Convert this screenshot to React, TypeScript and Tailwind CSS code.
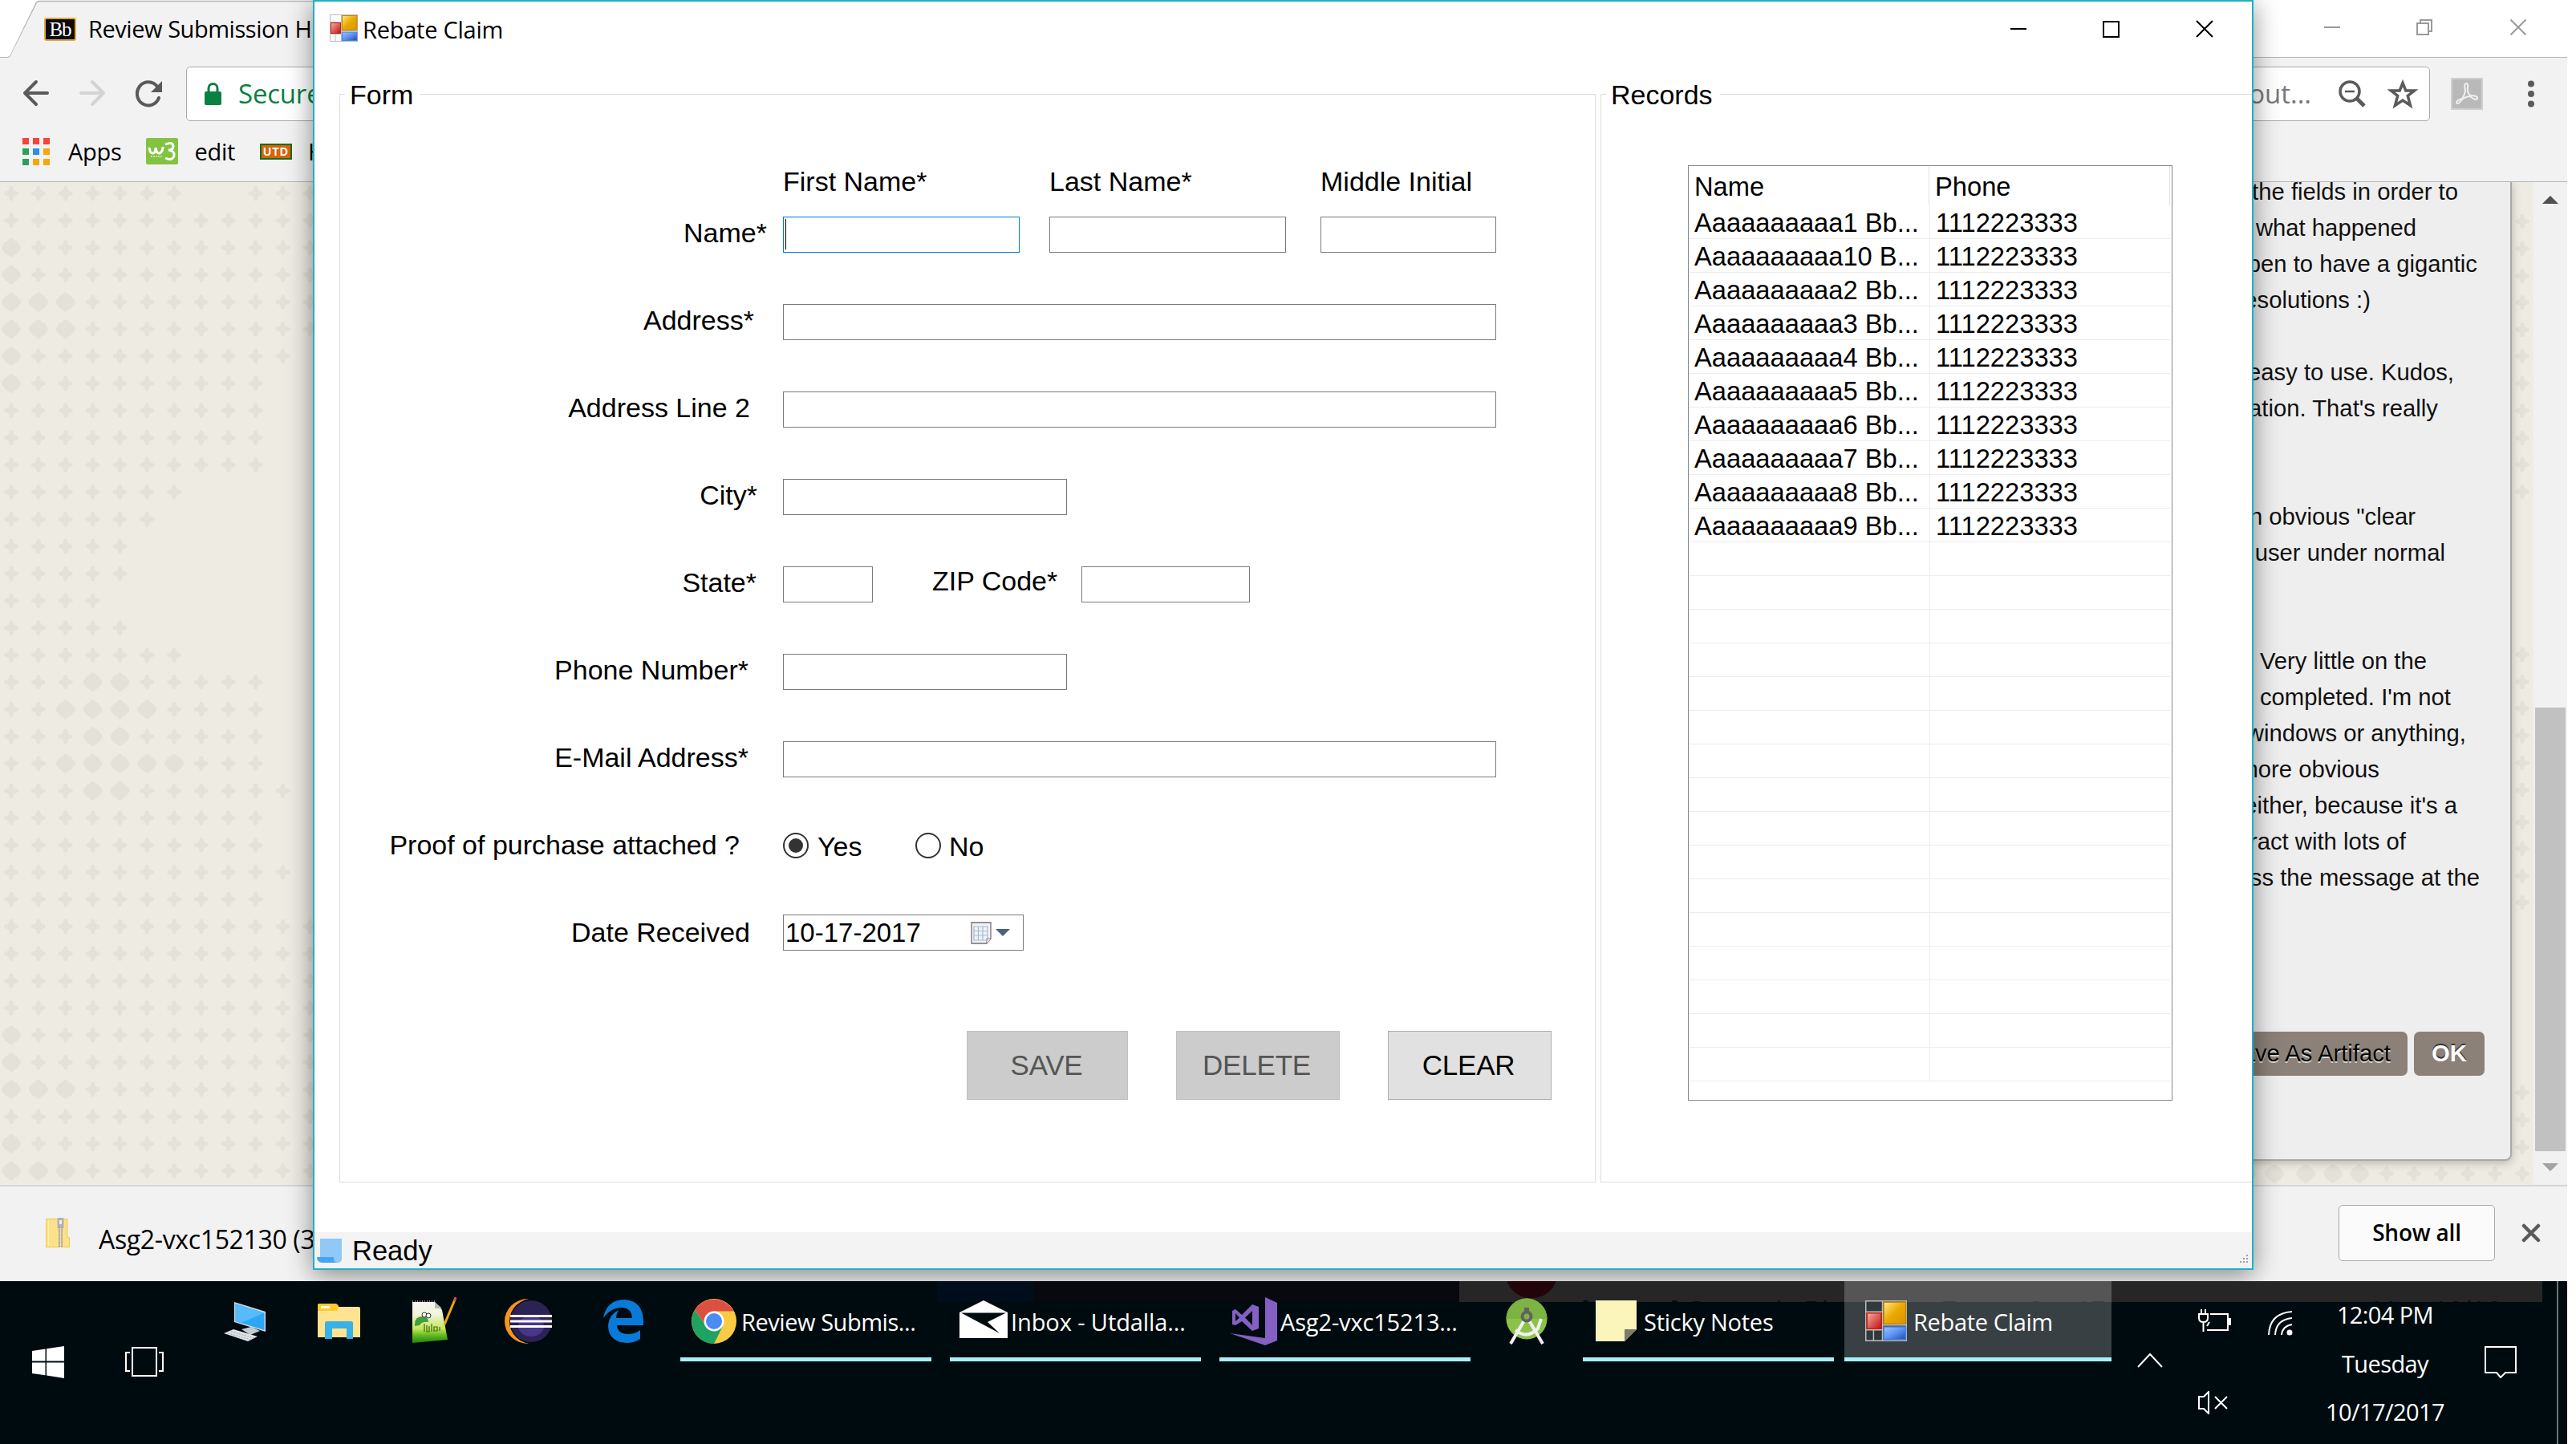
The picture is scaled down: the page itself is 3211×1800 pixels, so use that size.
import React from "react";

/* ---------- page background ornament ---------- */

const P = 33.85;
const LEFT_ROWS: string[] = [
  "+++++++..+++",
  "++++++++++++",
  "o+++++++++++",
  "o+++++++++++",
  "ooo+++++++++",
  "ooo+++++++++",
  "o++++++++++.",
  "o+++++++++..",
  "++++++++++..",
  "++++++++++..",
  "++++++++++..",
  "+++++++.....",
  "++++++......",
  "+++++.......",
  "+++++.......",
  "++++........",
  "+++++.......",
  "+++++++.....",
  "+++oo+++++..",
  "++oooo++++..",
  "+++oo+++++..",
  "++ooooo+++..",
  "+++oo++++++.",
  "++++++++++..",
  "++++++++++..",
  "+++++++++++.",
  "++++++++++..",
  "++++++++++++",
  "++++++++++++",
  "++++++++++++",
  "++++++++++++",
  "o+++++++++++",
  "o+++++++++++",
  "ooo+++++++++",
  "++++++++++++",
  "o+++++++++++",
  "ooo+++++++++",
];

function Plus({ x, y }: { x: number; y: number }) {
  return (
    <path
      transform={`translate(${x} ${y})`}
      d="M-2-8.500Q0-10 2-8.500L3.500-3.500L8-2Q10 0 8 2L3.500 3.500L2 8.500Q0 10-2 8.500L-3.500 3.500L-8 2Q-10 0-8-2L-3.500-3.500Z"
      fill="#e4e1d9"
    />
  );
}
function Flower({ x, y }: { x: number; y: number }) {
  return (
    <path
      transform={`translate(${x} ${y})`}
      d="M-4-9Q0-15 4-9L8-7Q9-4 10-4Q14 0 10 4Q9 4 8 7L4 9Q0 15-4 9L-8 7Q-9 4-10 4Q-14 0-10-4Q-9-4-8-7Z"
      fill="#e4e1d9"
    />
  );
}

const RIGHT_YS = [
  49, 83, 117, 150, 184, 217, 251, 285, 319, 352, 386, 589, 623, 656, 690, 724, 758, 798, 831, 865, 898, 1135, 1169, 1203,
];

function Ornament() {
  return (
    <svg className="absolute inset-0" width="3158" height="1250" viewBox="0 0 3158 1250">
      {LEFT_ROWS.map((row, r) =>
        row.split("").map((c, k) =>
          c === "+" ? (
            <Plus key={`${r}-${k}`} x={14 + P * k} y={14 + P * r} />
          ) : c === "o" ? (
            <Flower key={`${r}-${k}`} x={14 + P * k} y={14 + P * r} />
          ) : null,
        ),
      )}
      {RIGHT_YS.map((y) => (
        <Plus key={y} x={3144} y={y} />
      ))}
      {[2801, 2835, 2874, 2908, 2941].map((x) => (
        <Flower key={x} x={x} y={1236} />
      ))}
      {[2975, 3009, 3043, 3076, 3110, 3144].map((x) => (
        <Plus key={x} x={x} y={1236} />
      ))}
    </svg>
  );
}

/* ---------- icons ---------- */

function FormIcon({ className, dark }: { className: string; dark?: boolean }) {
  const cell = dark ? "#30393c" : "#ffffff";
  return (
    <svg className={className} viewBox="0 0 35 34" preserveAspectRatio="none">
      <defs>
        <linearGradient id="fy" x1="0" y1="0" x2="1" y2="1">
          <stop offset="0" stopColor="#ffe98a" />
          <stop offset=".5" stopColor="#eaa800" />
          <stop offset="1" stopColor="#d89400" />
        </linearGradient>
        <linearGradient id="fr" x1="0" y1="0" x2="1" y2="1">
          <stop offset="0" stopColor="#f7b0a8" />
          <stop offset="1" stopColor="#c00f0f" />
        </linearGradient>
        <linearGradient id="fb" x1="0" y1="0" x2="1" y2="1">
          <stop offset="0" stopColor="#9cc4ff" />
          <stop offset=".5" stopColor="#5b93f5" />
          <stop offset="1" stopColor="#1d4da8" />
        </linearGradient>
      </defs>
      <rect x=".5" y=".5" width="34" height="33" fill={cell} stroke="#bdbdbd" />
      <path d="M14.500 0V34M0 9.500H14M0 24.500H14M7 25V34M14 20.500H35" stroke="#bdbdbd" />
      <rect x="1.500" y="10.500" width="12" height="13" fill="url(#fr)" stroke="#c8200f" />
      <rect x="15.500" y="1.500" width="18.500" height="18" fill="url(#fy)" stroke="#c08a00" />
      <rect x="15.500" y="22" width="18.500" height="10.500" fill="url(#fb)" stroke="#4a7fdc" />
    </svg>
  );
}

function BackArrow({ className }: { className: string }) {
  return (
    <svg className={className} viewBox="0 0 34 34" fill="none" stroke="currentColor" strokeWidth="4" strokeLinecap="round" strokeLinejoin="round">
      <path d="M31 17H3M17 3L3 17L17 31" />
    </svg>
  );
}
function Reload() {
  return (
    <svg className="h-[34px] w-[36px]" viewBox="0 0 36 34">
      <path d="M29 8A14 14.500 0 1 0 31 22" fill="none" stroke="#5a5a5a" strokeWidth="4" strokeLinecap="round" />
      <path d="M35 1V15H21Z" fill="#5a5a5a" />
    </svg>
  );
}
function AppsGrid() {
  const colors = ["#f7423a", "#f7423a", "#f7423a", "#2da05a", "#2a8cf0", "#f5a70c", "#2da05a", "#f5a70c", "#f5a70c"];
  return (
    <div className="grid grid-cols-3 gap-x-[5px] gap-y-[5px]">
      {colors.map((c, i) => (
        <div key={i} className="h-[8px] w-[8px]" style={{ backgroundColor: c }} />
      ))}
    </div>
  );
}

/* ---------- browser ---------- */

const seg = "font-['Open_Sans',sans-serif]";
const ari = "font-['Liberation_Sans',Arial,sans-serif]";

function BrowserTop() {
  return (
    <div className="relative h-[227px] w-full bg-[#f2f2f2] border-b border-[#b6b4b6]">
      <div className="flex h-[72px] items-start justify-between border-b border-[#b5b5b5] bg-white">
        <div className="relative flex h-[72px] w-[460px] items-center">
          <svg className="absolute left-0 top-0" width="460" height="72" viewBox="0 0 460 72">
            <path d="M0 71.500H9Q13 71 15 66L43 6Q45 1.500 48 1.500H460V73H0Z" fill="#f2f2f2" />
            <path d="M0 71.500H9Q12.500 71 14 66L44 6Q45.500 1.500 49 1.500H460" fill="none" stroke="#b5b5b5" strokeWidth="1.500" />
            <path d="M0 0H46Q43.500 2 43 6L14 66Q12.500 70.500 9 71H0Z" fill="#fff" />
          </svg>
          <div className="relative ml-[55px] flex h-[29px] w-[40px] items-center justify-center rounded-[3px] border-2 border-[#e0a93a] bg-[#0c0c0c] font-['Liberation_Serif',serif] text-[25px] leading-none tracking-[-1px] text-white">
            Bb
          </div>
          <span className={`relative ml-[15px] whitespace-nowrap text-[29px] leading-[70px] tracking-[-0.450px] text-black ${seg}`}>
            Review Submission H
          </span>
        </div>
        <div className="mr-[51px] mt-[24px] flex text-[#9a9a9a]">
          <svg className="h-[20px] w-[20px]" viewBox="0 0 20 20">
            <path d="M0 10H20" stroke="currentColor" strokeWidth="2" />
          </svg>
          <svg className="ml-[95px] h-[20px] w-[20px]" viewBox="0 0 20 20" fill="none" stroke="currentColor" strokeWidth="2">
            <path d="M1 5H15V19H1ZM5 5V1H19V15H15" />
          </svg>
          <svg className="ml-[97px] h-[20px] w-[20px]" viewBox="0 0 20 20" stroke="currentColor" strokeWidth="2">
            <path d="M0.500 0.500L19.500 19.500M19.500 0.500L0.500 19.500" />
          </svg>
        </div>
      </div>
      <div className="flex h-[79px] items-end">
        <BackArrow className="mb-[18px] ml-[28px] h-[34px] w-[34px] text-[#5a5a5a]" />
        <BackArrow className="mb-[18px] ml-[36px] h-[34px] w-[34px] rotate-180 text-[#d3d3d3]" />
        <div className="mb-[17px] ml-[35px]">
          <Reload />
        </div>
        <div className="ml-[29px] flex h-[68px] w-[2797px] items-center rounded-[5px] border border-[#a9a9a9] bg-white">
          <svg className="ml-[22px] h-[28px] w-[21px]" viewBox="0 0 21 28">
            <rect x="0" y="11" width="21" height="17" rx="2" fill="#0b8043" />
            <path d="M5 12V7A5.500 5.500 0 0 1 16 7V12" fill="none" stroke="#0b8043" strokeWidth="3" />
          </svg>
          <span className={`ml-[21px] text-[33px] tracking-[-0.200px] text-[#0b8043] ${seg}`}>Secure</span>
          <span className={`ml-auto text-[33px] text-[#777] ${seg}`}>out...</span>
          <svg className="ml-[34px] h-[35px] w-[35px]" viewBox="0 0 35 35" fill="none" stroke="#5a5a5a">
            <circle cx="14" cy="14" r="12" strokeWidth="3.500" />
            <path d="M8 14H20" strokeWidth="2.500" />
            <path d="M23 23L32 32" strokeWidth="5" />
          </svg>
          <svg className="ml-[26px] mr-[14px] h-[37px] w-[38px]" viewBox="0 0 38 37" fill="none" stroke="#5a5a5a" strokeWidth="3.500">
            <path d="M19 4.500L22.800 14H33.500L25.300 20.500L28.500 32.500L19 26L9.500 32.500L12.700 20.500L4.500 14H15.200Z" />
          </svg>
        </div>
        <svg className="mb-[14px] ml-[26px] h-[40px] w-[40px]" viewBox="0 0 40 40">
          <rect x="1" y="1" width="38" height="38" fill="#b9b9b9" stroke="#d0d0d0" strokeWidth="2" />
          <path
            d="M19 7Q22 7 21 12Q20 18 24 22Q34 22 33 26Q31 29 24 23Q17 24 14 27Q9 34 7 31Q7 28 14 26Q18 20 18 14Q16 8 19 7Z"
            fill="none"
            stroke="#f0f0f0"
            strokeWidth="2"
          />
        </svg>
        <svg className="mb-[17px] ml-[56px] h-[34px] w-[8px]" viewBox="0 0 8 34" fill="#5a5a5a">
          <circle cx="4" cy="4.500" r="4" />
          <circle cx="4" cy="17" r="4" />
          <circle cx="4" cy="29.500" r="4" />
        </svg>
      </div>
      <div className={`flex h-[75px] items-center text-[29px] tracking-[-0.300px] text-black ${seg}`}>
        <div className="ml-[28px]">
          <AppsGrid />
        </div>
        <span className="ml-[23px]">Apps</span>
        <svg className="ml-[31px] h-[33px] w-[40px]" viewBox="0 0 40 33">
          <rect width="40" height="33" rx="2" fill="#82c341" />
          <path d="M4 12Q5 20 9 19Q12 18 12 12Q13 20 17 19Q21 17 21 11M24 8Q33 4 34 10Q34 15 28 15Q36 16 35 22Q33 29 24 25" fill="none" stroke="#fff" strokeWidth="3" />
          <path d="M6 23H20" stroke="#d8edc4" strokeWidth="1.500" strokeDasharray="2 1" />
        </svg>
        <span className="ml-[20px]">edit</span>
        <div className="ml-[31px] flex h-[20px] w-[40px] items-center justify-center border-2 border-[#1c6b1c] bg-[#d8630a] font-['Liberation_Sans',sans-serif] text-[14px] font-bold leading-none tracking-[1px] text-white">
          UTD
        </div>
        <span className="ml-[20px]">Home</span>
      </div>
    </div>
  );
}

const COMMENT: { t: string; c: string }[] = [
  { t: "all the fields in order to", c: "pr-[65px]" },
  { t: "what happened", c: "pr-[117px]" },
  { t: "happen to have a gigantic", c: "pr-[41px]" },
  { t: "resolutions :)", c: "pr-[174px]" },
  { t: "", c: "" },
  { t: "easy to use. Kudos,", c: "pr-[70px]" },
  { t: "ation. That's really", c: "pr-[90px]" },
  { t: "", c: "" },
  { t: "", c: "" },
  { t: 'an obvious "clear', c: "pr-[118px]" },
  { t: "user under normal", c: "pr-[81px]" },
  { t: "", c: "" },
  { t: "", c: "" },
  { t: "Very little on the", c: "pr-[104px]" },
  { t: "completed. I'm not", c: "pr-[74px]" },
  { t: "windows or anything,", c: "pr-[55px]" },
  { t: "more obvious", c: "pr-[163px]" },
  { t: "either, because it's a", c: "pr-[66px]" },
  { t: "interact with lots of", c: "pr-[130px]" },
  { t: "miss the message at the", c: "pr-[38px]" },
];

function BrowserPage() {
  return (
    <div className="relative flex h-[1250px] overflow-hidden bg-[#eeebe3]">
      <Ornament />
      <div className="relative ml-[2400px] h-[1220px] w-[731px] rounded-br-[8px] border-b-2 border-r-2 border-[#a9a9a9] bg-[#eee] shadow-[0_2px_12px_rgba(0,0,0,0.25)]">
        <div className={`mt-[-10px] flex flex-col text-[29.250px] leading-[45px] text-[#111] ${ari}`}>
          {COMMENT.map((l, i) => (
            <div key={i} className={`h-[45px] whitespace-nowrap text-right ${l.c}`}>
              {l.t}
            </div>
          ))}
        </div>
        <div className={`mr-[32px] mt-[169px] flex justify-end gap-[8px] text-[29.250px] leading-[54px] ${ari}`}>
          <div className="h-[55px] rounded-[7px] bg-[#8b8178] pl-[22px] pr-[21px] text-black [text-shadow:0_2px_0_#d8d5d0]">
            Save As Artifact
          </div>
          <div className="h-[55px] w-[88px] rounded-[7px] bg-[#8b8178] text-center font-bold text-white [text-shadow:0_-2px_0_#333]">
            OK
          </div>
        </div>
      </div>
      <div className="relative ml-[27px] flex h-full w-[42px] flex-col items-center bg-[#f1f1f1]">
        <svg className="mt-[17px] h-[10px] w-[20px]" viewBox="0 0 20 10">
          <path d="M10 0L20 10H0Z" fill="#505050" />
        </svg>
        <div className="mt-[628px] h-[553px] w-[38px] bg-[#c1c1c1]" />
        <svg className="mt-[15px] h-[10px] w-[20px]" viewBox="0 0 20 10">
          <path d="M10 10L20 0H0Z" fill="#a3a3a3" />
        </svg>
      </div>
    </div>
  );
}

function DownloadBar() {
  return (
    <div className="flex h-[120px] items-start border-t-2 border-[#d5d5d5] bg-[#f2f2f2]">
      <svg className="ml-[57px] mt-[39px] h-[37px] w-[30px]" viewBox="0 0 30 37">
        <path d="M.5 1.500H27V24L29.500 25V36.500H.5Z" fill="#fde08a" stroke="#efc94c" />
        <path d="M3.500 3V35" stroke="#fff0b8" />
        <rect x="14.500" y="0" width="8" height="13" rx="1" fill="#b0b3b6" />
        <rect x="17" y="3" width="3" height="5" fill="#eee" />
        <path d="M18.500 12V37" stroke="#8c8c8c" strokeWidth="5" strokeDasharray="1.500 1" />
        <path d="M18.500 12V37" stroke="#dedede" strokeWidth="1.500" />
      </svg>
      <span className={`ml-[36px] mt-[43px] text-[32px] leading-[45px] tracking-[-0.350px] text-black ${seg}`}>
        Asg2-vxc152130 (3).zip
      </span>
      <div
        className={`ml-auto mt-[23px] h-[70px] w-[195px] rounded-[5px] border border-[#aaa] bg-[#fbfbfb] text-center text-[28px] font-semibold leading-[66px] tracking-[-0.200px] text-black ${seg}`}
      >
        Show all
      </div>
      <svg className="ml-[33px] mr-[33px] mt-[46px] h-[24px] w-[24px]" viewBox="0 0 24 24" stroke="#5a5a5a" strokeWidth="4.500" strokeLinecap="round">
        <path d="M3 3L21 21M21 3L3 21" />
      </svg>
    </div>
  );
}

/* ---------- dialog ---------- */

const input = "mt-[2px] h-[45px] border border-[#7a7a7a] bg-white";

function Row({ label, pad, children }: { label: string; pad: string; children: React.ReactNode }) {
  return (
    <div className="flex h-[109px] items-start">
      <div className={`w-[552px] whitespace-nowrap text-right leading-[45px] ${pad}`}>{label}</div>
      {children}
    </div>
  );
}

function FormGroup() {
  return (
    <div className="relative h-[1357px] w-[1566px] border border-[#dcdcdc]">
      <span className="absolute left-[6px] top-[-20px] w-[94px] bg-white pl-[6px] leading-[40px]">Form</span>
      <div className="flex h-[150px] pl-[552px] pt-[86px] leading-[45px]">
        <span className="w-[332px]">First Name*</span>
        <span className="w-[338px]">Last Name*</span>
        <span>Middle Initial</span>
      </div>
      <Row label="Name*" pad="pr-[20px]">
        <div className="mt-[2px] h-[45px] w-[295px] border border-[#0078d7] bg-white pl-[2px] pt-[2px]">
          <div className="h-[38px] w-px bg-black" />
        </div>
        <div className={`${input} ml-[37px] w-[295px]`} />
        <div className={`${input} ml-[43px] w-[219px]`} />
      </Row>
      <Row label="Address*" pad="pr-[36px]">
        <div className={`${input} w-[889px]`} />
      </Row>
      <Row label="Address Line 2" pad="pr-[41px]">
        <div className={`${input} w-[889px]`} />
      </Row>
      <Row label="City*" pad="pr-[32px]">
        <div className={`${input} w-[354px]`} />
      </Row>
      <Row label="State*" pad="pr-[33px]">
        <div className={`${input} w-[112px]`} />
        <div className="ml-[74px] mt-[-2px] w-[186px] leading-[45px]">ZIP Code*</div>
        <div className={`${input} w-[210px]`} />
      </Row>
      <Row label="Phone Number*" pad="pr-[43px]">
        <div className={`${input} w-[354px]`} />
      </Row>
      <Row label="E-Mail Address*" pad="pr-[43px]">
        <div className={`${input} w-[889px]`} />
      </Row>
      <Row label="Proof of purchase attached ?" pad="pr-[54px]">
        <div className="mt-[7px] flex h-[32px] w-[32px] items-center justify-center rounded-full border-2 border-[#333]">
          <div className="h-[18px] w-[18px] rounded-full bg-[#333]" />
        </div>
        <span className="ml-[11px] mt-[2px] w-[122px] leading-[45px]">Yes</span>
        <div className="mt-[7px] h-[32px] w-[32px] rounded-full border-2 border-[#333]" />
        <span className="ml-[10px] mt-[2px] leading-[45px]">No</span>
      </Row>
      <Row label="Date Received" pad="pr-[41px]">
        <div className="flex h-[45px] w-[300px] items-center border border-[#7a7a7a] bg-white">
          <span className="ml-[2px] w-[231px] text-[33px]">10-17-2017</span>
          <svg className="h-[28px] w-[26px]" viewBox="0 0 26 28">
            <path d="M1 1H25V21L20 27H1Z" fill="#eef3fb" stroke="#7d6c6c" strokeWidth="1.300" />
            <path d="M20 27V21H25" fill="#fff" stroke="#7d6c6c" />
            <path d="M4 6H21V23H4ZM9.500 6V23M15 6V23M4 11.500H21M4 17H21" fill="none" stroke="#a9b9c6" strokeWidth="1.200" />
          </svg>
          <svg className="ml-[5px] h-[9px] w-[18px]" viewBox="0 0 18 9">
            <path d="M0 0H18L9 9Z" fill="#4a6184" />
          </svg>
        </div>
      </Row>
      <div className="ml-[781px] mt-[36px] flex text-center text-[35px]">
        <div className="h-[86px] w-[201px] border border-[#bfbfbf] bg-[#ccc] pr-[2px] leading-[84px] tracking-[-0.200px] text-[#555]">SAVE</div>
        <div className="ml-[60px] h-[86px] w-[204px] border border-[#bfbfbf] bg-[#ccc] pr-[3px] leading-[84px] tracking-[-0.200px] text-[#555]">DELETE</div>
        <div className="ml-[60px] h-[86px] w-[204px] border border-[#adadad] bg-[#e1e1e1] pr-[3px] leading-[84px] tracking-[-0.200px] text-black">CLEAR</div>
      </div>
    </div>
  );
}

const NAMES = ["1 Bb...", "10 B...", "2 Bb...", "3 Bb...", "4 Bb...", "5 Bb...", "6 Bb...", "7 Bb...", "8 Bb...", "9 Bb..."];

function RecordsGroup() {
  const rows = Array.from({ length: 26 }, (_, i) => i);
  return (
    <div className="relative h-[1357px] w-[812px] border border-r-0 border-[#dcdcdc]">
      <span className="absolute left-[6px] top-[-20px] w-[142px] bg-white pl-[6px] leading-[40px]">Records</span>
      <div className="ml-[108px] mt-[88px] h-[1166px] w-[604px] overflow-hidden border border-[#828790] bg-white text-[32.700px]">
        <div className="flex h-[49px] leading-[51px]">
          <div className="w-[300px] border-r border-[#e0e0e0] pl-[7px]">Name</div>
          <div className="w-[300px] border-r border-[#e5e5e5] pl-[7px]">Phone</div>
        </div>
        {rows.map((i) => (
          <div key={i} className="flex h-[42px] leading-[44px]">
            <div className="h-[42px] w-[301px] border-b border-r border-[#ececec] pl-[7px]">
              {i < 10 ? `Aaaaaaaaaa${NAMES[i]}` : ""}
            </div>
            <div className="h-[42px] w-[299px] border-b border-[#ececec] pl-[7px]">{i < 10 ? "1112223333" : ""}</div>
          </div>
        ))}
      </div>
    </div>
  );
}

function Dialog() {
  return (
    <div
      className={`absolute left-[390px] top-0 flex h-[1583px] w-[2419px] flex-col border-2 border-[#1fb0c5] bg-white text-[34px] text-black shadow-[0_6px_30px_rgba(0,0,0,0.45)] ${ari}`}
    >
      <div className="flex h-[115px] items-start">
        <FormIcon className="ml-[19px] mt-[16px] h-[34px] w-[35px]" />
        <span className={`ml-[6px] mt-[2px] text-[29px] leading-[66px] tracking-[-0.250px] ${seg}`}>Rebate Claim</span>
        <svg className="ml-auto mt-[23px] h-[22px] w-[22px]" viewBox="0 0 22 22">
          <path d="M1 11H21" stroke="#000" strokeWidth="2" />
        </svg>
        <svg className="ml-[93px] mt-[23px] h-[22px] w-[22px]" viewBox="0 0 22 22">
          <rect x="2" y="2" width="19" height="19" fill="none" stroke="#000" strokeWidth="2" />
        </svg>
        <svg className="ml-[95px] mr-[48px] mt-[23px] h-[22px] w-[22px]" viewBox="0 0 22 22">
          <path d="M1 1L21 21M21 1L1 21" stroke="#000" strokeWidth="2" />
        </svg>
      </div>
      <div className="flex gap-[6px] pl-[31px]">
        <FormGroup />
        <RecordsGroup />
      </div>
      <div className="mt-auto flex h-[45px] items-center bg-[#f3f3f3]">
        <svg className="ml-[3px] h-[30px] w-[32px]" viewBox="0 0 32 30">
          <path d="M4 0H31V26Q30 30 26 30H8L4 24Z" fill="#90c8f8" />
          <path d="M0 23H21Q20 30 26 30H6Q0 29 0 23Z" fill="#42a5f5" />
        </svg>
        <span className="ml-[12px] mt-[2px] text-[34.500px] leading-[45px]">Ready</span>
        <svg className="ml-auto mr-[3px] mt-[20px] h-[12px] w-[12px]" viewBox="0 0 12 12" fill="#a0a0a0">
          <path d="M0 9h2v2h-2zM4 9h2v2h-2zM8 9h2v2h-2zM4 5h2v2h-2zM8 5h2v2h-2zM8 1h2v2h-2z" />
        </svg>
      </div>
    </div>
  );
}

/* ---------- taskbar ---------- */

function TaskButton({ text, className, children, active }: { text: string; className: string; children: React.ReactNode; active?: boolean }) {
  return (
    <div
      className={`flex h-[100px] items-start border-b-[5px] border-[#a5f0fa] ${className} ${active ? "bg-[#ffffff38]" : ""}`}
    >
      {children}
      <span className="mt-[27px] whitespace-nowrap leading-[47px]">{text}</span>
    </div>
  );
}

function Taskbar() {
  return (
    <div className={`relative h-[203px] w-[3200px] overflow-hidden bg-[#000b0f] text-[29px] tracking-[-0.450px] text-white ${seg}`}>
      <div className="absolute left-0 top-0 flex h-[26px] w-[3170px] pl-[1168px]">
        <div className="h-full w-[120px] bg-[#000d1b]" />
        <div className="h-full w-[531px] bg-[#08090f]" />
        <div className={`relative h-full w-[1350px] overflow-hidden bg-[#262626] text-[32px] text-[#0c0c0c] ${ari}`}>
          <div className="absolute left-[58px] top-[-40px] h-[61px] w-[64px] rounded-full bg-[#24040b]" />
          <div className="absolute left-[152px] top-[20px] whitespace-nowrap leading-[32px] tracking-[1px]">[project] Strategic Planning</div>
          <div className="absolute left-[600px] top-[20px] whitespace-nowrap leading-[32px]">Fr</div>
          <div className="absolute left-[706px] top-[20px] whitespace-nowrap leading-[32px] tracking-[1px]">Oct 17</div>
          <div className="absolute left-[1139px] top-[20px] whitespace-nowrap leading-[32px] tracking-[1px]">Mon 10/16</div>
        </div>
      </div>
      <div className="relative flex h-full items-start">
        {/* start */}
        <svg className="ml-[40px] mt-[81px] h-[40px] w-[40px]" viewBox="0 0 40 40" fill="#fff">
          <path d="M0 6L16.500 3.400V18.500H0ZM18 3.200L40 0V18.500H18ZM0 20.500H16.500V36.300L0 34ZM18 20.500H40V40L18 36.500Z" />
        </svg>
        <svg className="ml-[76px] mt-[82px] h-[37px] w-[48px]" viewBox="0 0 48 37" fill="none" stroke="#fff" strokeWidth="2">
          <path d="M9 1H39V36H9ZM6 7H1V30H6M42 7H47V30H42" />
        </svg>
        {/* this pc */}
        <svg className="ml-[75px] mt-[26px] h-[50px] w-[53px]" viewBox="0 0 53 50">
          <path d="M13 0L52 12V37L13 25Z" fill="#cfdde6" />
          <path d="M14.500 2L50.500 13.500V35L14.500 24Z" fill="#2ba7f5" />
          <path d="M14.500 2L50.500 13.500L22 26L14.500 24Z" fill="#55bbfa" />
          <path d="M22 34L34 31L45 36L33 41Z" fill="#c3cdd3" />
          <path d="M0 39L12 34L42 43L30 49Z" fill="#dfe3e6" />
          <path d="M5 39L34 47M9 37L38 45" stroke="#9aa3a8" strokeDasharray="2 1.500" />
        </svg>
        {/* explorer */}
        <svg className="ml-[64px] mt-[28px] h-[44px] w-[53px]" viewBox="0 0 53 44">
          <path d="M0 2Q0 0 2 0H21Q25 0 26 4H51Q53 4 53 6V42H0Z" fill="#ffe391" />
          <path d="M0 2Q0 0 2 0H21Q25 0 26 4L24 9H0Z" fill="#ffca28" />
          <rect x="4" y="3" width="11" height="3" fill="#fff" />
          <path d="M9 44V24Q9 22 12 22H41Q44 22 44 24V44H36V31H18V44Z" fill="#37b1e6" />
        </svg>
        {/* notepad++ */}
        <svg className="ml-[65px] mt-[20px] h-[58px] w-[55px]" viewBox="0 0 55 58">
          <defs>
            <linearGradient id="np" x1="0" y1="0" x2="0" y2="1">
              <stop offset="0" stopColor="#f4f6f2" />
              <stop offset=".3" stopColor="#f0f5dc" />
              <stop offset=".65" stopColor="#c6e65a" />
              <stop offset=".82" stopColor="#5fb81f" />
              <stop offset="1" stopColor="#1f8410" />
            </linearGradient>
          </defs>
          <path d="M0 6H28L37 16L44 53L0 57Z" fill="url(#np)" />
          <path d="M28 6V14H37Z" fill="#b9b9b9" />
          <path d="M0 5H28" stroke="#888" strokeWidth="2" strokeDasharray="1 2" />
          <path d="M3 34Q3 24 12 24Q20 24 20 31Q12 30 9 35L3 36Z" fill="#3fa03a" />
          <circle cx="15" cy="22" r="3" fill="#fff" stroke="#333" />
          <circle cx="20" cy="23" r="3" fill="#fff" stroke="#333" />
          <path d="M15 33V43M18 35V43H21V36M24 33V43M27 37H31V42H27ZM34 37V42" fill="none" stroke="#3a6a1a" strokeWidth="1.200" />
          <path d="M53 3L40 34" stroke="#f2a416" strokeWidth="3" />
          <path d="M54 0L52.500 5" stroke="#d9534f" strokeWidth="3" />
        </svg>
        {/* eclipse */}
        <svg className="ml-[60px] mt-[22px] h-[56px] w-[60px]" viewBox="0 0 60 56">
          <ellipse cx="29" cy="28" rx="29" ry="28" fill="#f7941e" />
          <ellipse cx="36" cy="28" rx="30" ry="28.500" fill="#000b0f" />
          <ellipse cx="33" cy="28" rx="26" ry="26" fill="#2c2255" />
          <ellipse cx="33" cy="34" rx="16" ry="13" fill="#473788" />
          <path d="M7 21.500H59M7 28H59M7 34.500H59" stroke="#fff" strokeWidth="3" />
        </svg>
        {/* edge */}
        <svg className="ml-[63px] mt-[23px] h-[54px] w-[50px]" viewBox="0 0 50 54">
          <path
            d="M0 23Q4 0 27 0Q50 2 50 28V32H17Q18 43 31 43Q40 43 46 38V49Q39 54 29 54Q7 53 6 33Q7 19 19 13Q16 18 16 23H36Q35 11 25 10Q10 9 0 23Z"
            fill="#0a7ad8"
          />
        </svg>
        <TaskButton text="Review Submis..." className="ml-[46px] w-[313px] pl-[14px]">
          <svg className="mr-[6px] mt-[22px] h-[56px] w-[56px]" viewBox="0 0 56 56">
            <circle cx="28" cy="28" r="28" fill="#f9cb45" />
            <path d="M4 14A28 28 0 0 1 52.500 15.500H28L17 32Z" fill="#dc4f43" />
            <path d="M4 14A28 28 0 0 0 28 56L39 34L16 31Z" fill="#1ea362" />
            <circle cx="28" cy="28" r="12.500" fill="#fff" />
            <circle cx="28" cy="28" r="10" fill="#4b8bf4" />
          </svg>
        </TaskButton>
        <TaskButton text="Inbox - Utdalla..." className="ml-[23px] w-[313px] pl-[12px] tracking-[-0.100px]">
          <svg className="mr-[4px] mt-[24px] h-[47px] w-[60px]" viewBox="0 0 60 47">
            <path d="M0 15L30 0L60 15V47H0Z" fill="#fff" />
            <path d="M2 15.500H58L35 27L50 41Z" fill="#000b0f" />
          </svg>
        </TaskButton>
        <TaskButton text="Asg2-vxc15213..." className="ml-[23px] w-[313px] pl-[13px] tracking-[-0.150px]">
          <svg className="mr-[4px] mt-[20px] h-[60px] w-[59px]" viewBox="0 0 59 60">
            <path d="M44 0L59 7V54L44 60L0 45L44 51Z" fill="#865fc5" />
            <path d="M3 17L7 15L15 22L28 9L36 12V39L28 42L15 30L7 35L3 34ZM7 20V30L12 25.500ZM28 17L19 25.500L28 35Z" fill="#865fc5" fillRule="evenodd" />
          </svg>
        </TaskButton>
        {/* android studio */}
        <svg className="ml-[44px] mt-[21px] h-[58px] w-[52px]" viewBox="0 0 52 58">
          <ellipse cx="26" cy="26" rx="25.500" ry="25.500" fill="#8bc34a" />
          <path d="M.5 26A25.500 25.500 0 0 1 51.500 26Z" fill="#7cb342" />
          <path d="M23 28L6 57M29 28L46 57M12 40Q26 52 40 38L44 26" fill="none" stroke="#f0f0f0" strokeWidth="4" />
          <path d="M23 12H29V17H23Z" fill="#616161" />
          <circle cx="26" cy="23" r="5.500" fill="none" stroke="#616161" strokeWidth="4" />
        </svg>
        <TaskButton text="Sticky Notes" className="ml-[44px] w-[313px] pl-[16px] tracking-[-0.250px]">
          <svg className="mr-[9px] mt-[24px] h-[51px] w-[51px]" viewBox="0 0 51 51">
            <path d="M0 0H51V36L36 51H0Z" fill="#fbf4bb" />
            <path d="M36 51V36H51Z" fill="#7c7c66" />
          </svg>
        </TaskButton>
        <TaskButton text="Rebate Claim" className="ml-[13px] w-[333px] pl-[26px] tracking-[-0.350px]" active>
          <FormIcon dark className="mr-[8px] mt-[24px] h-[51px] w-[52px]" />
        </TaskButton>
        {/* tray */}
        <svg className="ml-[32px] mt-[89px] h-[19px] w-[32px]" viewBox="0 0 32 19" fill="none" stroke="#fff" strokeWidth="2">
          <path d="M1 18L16 2L31 18" />
        </svg>
        <div className="ml-[44px] flex flex-col">
          <svg className="mt-[35px] h-[28px] w-[41px]" viewBox="0 0 41 28" fill="none" stroke="#fff" strokeWidth="2">
            <path d="M15 6H37V26H11M4 0V6M9 0V6M1 6H12V11Q12 16 6.500 16Q1 16 1 11ZM6.500 16V28" />
            <path d="M39.500 11V20" strokeWidth="3" />
            <path d="M11 21L14 16" />
          </svg>
          <svg className="mt-[74px] h-[29px] w-[37px]" viewBox="0 0 37 29" fill="none" stroke="#fff" strokeWidth="2">
            <path d="M1 7H7L13 1V28L7 22H1ZM21 7L36 22M36 7L21 22" />
          </svg>
        </div>
        <svg className="ml-[46px] mt-[37px] h-[31px] w-[31px]" viewBox="0 0 31 31" fill="none" stroke="#fff" strokeWidth="2">
          <path d="M1 30Q2 3 30 1M9 30Q10 11 30 9M17 30Q18 19 30 17" />
          <circle cx="27" cy="27" r="2.500" fill="#fff" />
        </svg>
        <div className="ml-[25px] mt-[12px] w-[180px] text-center leading-[60.500px] tracking-[-0.600px]">
          <div>12:04 PM</div>
          <div>Tuesday</div>
          <div>10/17/2017</div>
        </div>
        <svg className="ml-[34px] mt-[81px] h-[40px] w-[40px]" viewBox="0 0 40 40" fill="none" stroke="#fff" strokeWidth="2">
          <path d="M1 1H39V33H26L20 39L15 33H1Z" />
        </svg>
        <div className="ml-auto mr-[11px] h-full w-[2px] bg-[#6b7378]" />
      </div>
    </div>
  );
}

export default function App() {
  return (
    <div className="h-[1800px] w-[3211px] overflow-hidden bg-white">
      <div className="relative h-[1597px] w-[3200px] overflow-hidden">
        <BrowserTop />
        <BrowserPage />
        <DownloadBar />
        <Dialog />
      </div>
      <Taskbar />
    </div>
  );
}
